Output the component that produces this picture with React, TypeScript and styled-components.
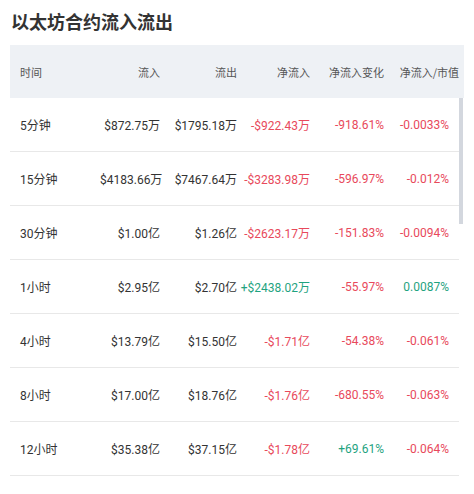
import React from "react";
import styled, { createGlobalStyle } from "styled-components";

const GlobalStyle = createGlobalStyle`
  html, body {
    margin: 0;
    padding: 0;
    height: 100%;
    overflow: hidden;
    background: #ffffff;
  }
  body {
    font-family: "Roboto", "Noto Sans CJK SC", sans-serif;
    color: #333;
  }
`;

const Page = styled.div`
  display: flex;
  flex-direction: column;
  height: 100vh;
  padding: 9px 10px 0 10px;
  box-sizing: border-box;
`;

const Title = styled.h1`
  margin: 0 0 12px 1px;
  font-family: "Noto Sans CJK SC", "Noto Sans", sans-serif;
  font-size: 18px;
  line-height: 24px;
  font-weight: 700;
  color: #333;
`;

const Table = styled.div`
  display: flex;
  flex-direction: column;
  flex: 1;
  min-height: 0;
`;

const cols = "90px 60px 77px 73px 74px";

const HeaderRow = styled.div`
  display: grid;
  grid-template-columns: ${cols} 75px;
  align-items: center;
  height: 53px;
  padding-right: 5px;
  background: #eef1f5;
  font-family: "Noto Sans CJK SC", sans-serif;
  font-size: 11px;
  color: #555;
`;

const HeadCell = styled.div<{ $left?: boolean }>`
  text-align: ${(p) => (p.$left ? "left" : "right")};
  padding-left: ${(p) => (p.$left ? "10px" : "0")};
  white-space: nowrap;
`;

const Body = styled.div`
  position: relative;
  flex: 1;
  min-height: 0;
  overflow: hidden;
  padding-right: 5px;
`;

const ScrollThumb = styled.div`
  position: absolute;
  top: 0;
  right: 1px;
  width: 4px;
  height: 126px;
  background: #d3d7de;
`;

const Row = styled.div`
  display: grid;
  grid-template-columns: ${cols} 65px;
  align-items: center;
  height: 54px;
  box-sizing: border-box;
  border-bottom: 1px solid #e8e8e8;
  font-size: 12px;
  color: #333;
`;

type Tone = "up" | "down" | "plain";

const Cell = styled.div<{ $left?: boolean; $tone?: Tone }>`
  text-align: ${(p) => (p.$left ? "left" : "right")};
  padding-left: ${(p) => (p.$left ? "10px" : "0")};
  white-space: nowrap;
  color: ${(p) =>
    p.$tone === "up" ? "#1fa37f" : p.$tone === "down" ? "#e8495b" : "#333"};
`;

type Data = [string, string, string, string, string, string];

const rows: Data[] = [
  ["5分钟", "$872.75万", "$1795.18万", "-$922.43万", "-918.61%", "-0.0033%"],
  ["15分钟", "$4183.66万", "$7467.64万", "-$3283.98万", "-596.97%", "-0.012%"],
  ["30分钟", "$1.00亿", "$1.26亿", "-$2623.17万", "-151.83%", "-0.0094%"],
  ["1小时", "$2.95亿", "$2.70亿", "+$2438.02万", "-55.97%", "0.0087%"],
  ["4小时", "$13.79亿", "$15.50亿", "-$1.71亿", "-54.38%", "-0.061%"],
  ["8小时", "$17.00亿", "$18.76亿", "-$1.76亿", "-680.55%", "-0.063%"],
  ["12小时", "$35.38亿", "$37.15亿", "-$1.78亿", "+69.61%", "-0.064%"],
];

const toneOf = (v: string): Tone => {
  if (v.startsWith("-")) return "down";
  if (v.startsWith("+")) return "up";
  return /^\d/.test(v) ? "up" : "plain";
};

const headers = ["时间", "流入", "流出", "净流入", "净流入变化", "净流入/市值"];

export default function App() {
  return (
    <>
      <GlobalStyle />
      <Page>
        <Title>以太坊合约流入流出</Title>
        <Table>
          <HeaderRow>
            {headers.map((h, i) => (
              <HeadCell key={h} $left={i === 0}>
                {h}
              </HeadCell>
            ))}
          </HeaderRow>
          <Body>
            {rows.map((r) => (
              <Row key={r[0]}>
                <Cell $left>{r[0]}</Cell>
                <Cell>{r[1]}</Cell>
                <Cell>{r[2]}</Cell>
                <Cell $tone={toneOf(r[3])}>{r[3]}</Cell>
                <Cell $tone={toneOf(r[4])}>{r[4]}</Cell>
                <Cell $tone={toneOf(r[5])}>{r[5]}</Cell>
              </Row>
            ))}
            <ScrollThumb />
          </Body>
        </Table>
      </Page>
    </>
  );
}
